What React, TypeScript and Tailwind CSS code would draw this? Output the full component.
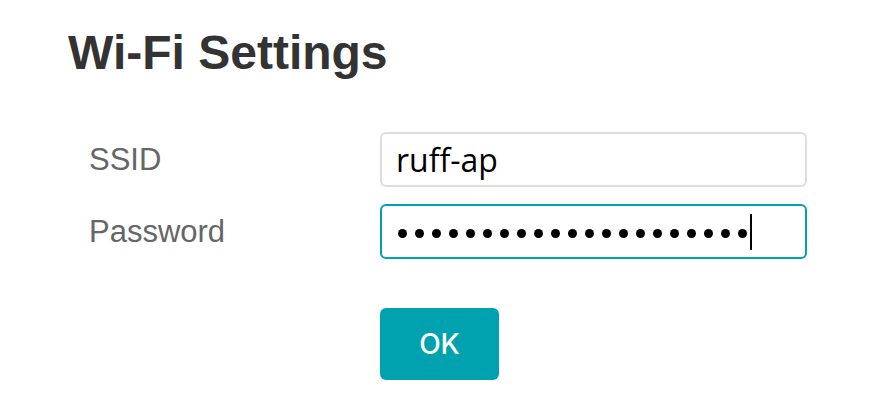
import React from "react";

export default function App() {
  const dots = Array.from({ length: 21 });
  return (
    <div className="w-[886px] h-[412px] bg-white pl-[68px] pt-[25px]" style={{ fontFamily: '"Liberation Sans", Arial, sans-serif' }}>
      <h1 className="text-[48px] leading-[56px] font-bold text-[#333333]">Wi-Fi Settings</h1>
      <div className="mt-[51px] flex flex-col gap-[17px]">
        <div className="flex items-center">
          <label className="w-[312px] pl-[21px] text-[31px] leading-[36px] text-[#666666]">SSID</label>
          <div className="w-[427px] h-[55px] border-2 border-[#dddddd] rounded-[6px] flex items-center pl-[14px] text-[32px] text-black" style={{ fontFamily: '"Open Sans", Inter, sans-serif' }}>
            ruff-ap
          </div>
        </div>
        <div className="flex items-center">
          <label className="w-[312px] pl-[21px] text-[31px] leading-[36px] text-[#666666]">Password</label>
          <div className="w-[427px] h-[55px] border-2 border-[#00a2b0] rounded-[6px] flex items-center pl-[16px]">
            <div className="flex items-center gap-[8px] mt-[4px]">
              {dots.map((_, i) => (
                <span key={i} className="block w-[9px] h-[9px] rounded-full bg-black" />
              ))}
            </div>
            <span className="block w-[2px] h-[36px] bg-black ml-[3px] mt-[1px]" />
          </div>
        </div>
      </div>
      <div className="mt-[49px] pl-[312px]">
        <button className="w-[119px] h-[72px] rounded-[6px] bg-[#00a2b0] text-white text-[28px] font-medium" style={{ fontFamily: 'Inter, "Open Sans", sans-serif' }}>
          OK
        </button>
      </div>
    </div>
  );
}
